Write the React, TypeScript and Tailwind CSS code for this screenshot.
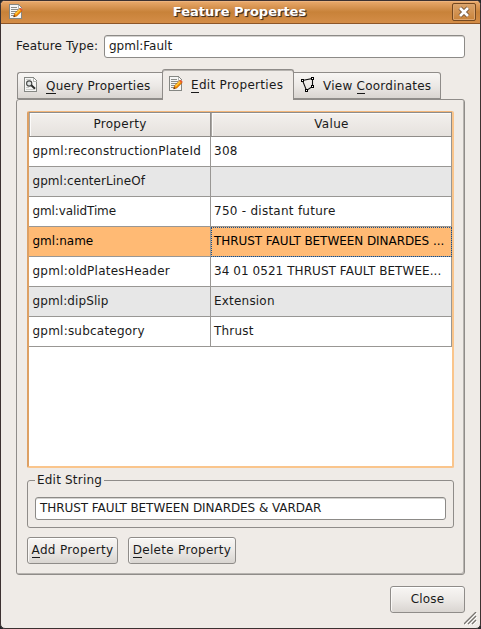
import React from "react";

const rows = [
  { name: "gpml:reconstructionPlateId", nameTracking: "tracking-[0.25px]", value: "308", valueTracking: "tracking-[0.3px]" },
  { name: "gpml:centerLineOf", nameTracking: "tracking-[0.05px]", value: "", valueTracking: "" },
  { name: "gml:validTime", nameTracking: "tracking-[-0.1px]", value: "750 - distant future", valueTracking: "tracking-[0.26px]" },
  { name: "gml:name", nameTracking: "", value: "THRUST FAULT BETWEEN DINARDES ...", valueTracking: "tracking-[-0.06px]", selected: true },
  { name: "gpml:oldPlatesHeader", nameTracking: "tracking-[0.25px]", value: "34 01 0521 THRUST FAULT BETWEE...", valueTracking: "tracking-[0.06px]" },
  { name: "gpml:dipSlip", nameTracking: "tracking-[0.1px]", value: "Extension", valueTracking: "tracking-[0.2px]" },
  { name: "gpml:subcategory", nameTracking: "tracking-[0.22px]", value: "Thrust", valueTracking: "tracking-[0.2px]" },
];

const surface = "bg-linear-to-b from-[#f8f6f4] via-[#ece9e6] to-[#d9d5d1]";
const field =
  "flex items-center rounded-[3px] border border-[#8c8a87] bg-white pb-[1px] shadow-[inset_0_1px_0_#d4d2cf]";
const button = `flex h-[27px] items-center justify-center rounded-[3px] border border-[#8f8c89] pb-[2px] shadow-[inset_0_1px_0_#fff,inset_1px_0_0_#faf8f6] ${surface}`;
const headerCell =
  "border-t border-r border-b border-[#8f8c89] p-0 pb-[1px] pl-[1px] font-normal tracking-[0.3px] shadow-[inset_1px_0_0_#a9a6a2,inset_2px_1px_0_#fcfbfa]";

function Document({ edit = false }: { edit?: boolean }) {
  return (
    <svg width="16" height={edit ? 16 : 17} viewBox={edit ? "0 0 16 16" : "0 0 16 17"} shapeRendering="crispEdges" className="shrink-0">
      <path d="M1.5 .5h9l3 3v11h-12z" fill="#f6f6f5" stroke="#858783" />
      <path d="M10.5 1v3h3" fill="#fff" stroke="#b5b7b3" />
      {edit ? (
        <>
          <path d="M3 3.5h6M3 5.5h7M3 7.5h7M3 9.5h5M3 11.5h4" stroke="#8b8d89" />
          <g shapeRendering="auto" transform="translate(-.8 0)">
            <path d="M6.4 12.9l1-3.2 5.3-5.2 2.2 2.2-5.3 5.2z" fill="#f58900" stroke="#b65a09" strokeWidth=".7" />
            <path d="M7.7 9.7l5-4.8 1 .8-4.9 5z" fill="#ffd13b" />
            <path d="M12.3 4.9l1.2-1.1 2.1 2.1-1.2 1.1z" fill="#e7582f" />
            <path d="M6.4 12.9l.6-1.7 1.1 1z" fill="#33291f" />
          </g>
        </>
      ) : (
        <>
          <path d="M3 2.5h5M3 10.5h3M3 12.5h8" stroke="#cacbc8" />
          <g shapeRendering="auto">
            <circle cx="6.2" cy="6.5" r="2.6" fill="#e0e4e4" stroke="#454745" strokeWidth="1.1" />
            <path d="M8.3 8.3l3.7 3.5" stroke="#292b29" strokeWidth="2" />
          </g>
        </>
      )}
    </svg>
  );
}

function Polygon() {
  return (
    <svg width="15" height="17" viewBox="0 0 15 17" className="shrink-0">
      <path d="M1.5 3.5l10-2v8l-6 4z" fill="none" stroke="#111" strokeWidth="1.1" />
      <g fill="#fff" stroke="#000" shapeRendering="crispEdges">
        <path d="M.5 2.5h2v2h-2zM10.5 .5h2v2h-2zM10.5 8.5h2v2h-2zM4.5 12.5h2v2h-2z" />
      </g>
    </svg>
  );
}

function Key({ children }: { children: string }) {
  return <span className="border-b border-[#1a1a1a]">{children}</span>;
}

export default function App() {
  return (
    <div className="h-[629px] w-[481px] bg-[#25272a] font-['DejaVu_Sans',sans-serif] text-[12px] leading-[14px] whitespace-nowrap text-[#1a1a1a]">
      <main className="relative flex h-full flex-col overflow-hidden rounded-[5px] border border-[#3c3131] bg-[#efebe7]">
        <header className="relative flex h-[23px] shrink-0 items-center border-b border-[#8d5628] bg-linear-to-b from-[#eaaa6c] via-[#c88239] to-[#d48d47] pr-[4px] pl-[7px] shadow-[inset_0_1px_0_#edb47e]">
          <Document edit />
          <h1 className="flex-1 pl-[3px] text-center text-[13px] font-bold text-white [text-shadow:1px_1px_1px_#493322,1px_1px_0_#493322]">Feature Propertes</h1>
          <button aria-label="Close window" className="flex h-[18px] w-6 items-center justify-center rounded-[2px] border border-[#744820] bg-linear-to-b from-[#daa36a] to-[#c98339] shadow-[inset_0_0_0_1px_#dca56f]">
            <svg width="12" height="12" viewBox="0 0 12 12">
              <path d="M2 2l8 8m0-8l-8 8" stroke="#5e4029" strokeWidth="4.2" />
              <path d="M2 2l8 8m0-8l-8 8" stroke="#fff" strokeWidth="2.8" />
            </svg>
          </button>
        </header>

        <div className="flex flex-1 flex-col px-[15px] pt-[11px]">
          <div className="flex h-[23px] items-center">
            <label className="w-[88px] pb-[1px] tracking-[0.1px]">Feature Type:</label>
            <div className={`${field} h-[23px] flex-1 pl-[4px]`}>gpml:Fault</div>
          </div>

          <nav className="mt-[11px] flex h-[31px] items-end pl-[1px]">
            <button className={`mb-[1px] flex h-[27px] w-[145px] items-center rounded-tl-[3px] border border-r-0 border-[#8f8c89] pl-[5px] ${surface}`}>
              <Document />
              <span className="ml-[7px] tracking-[0.22px]"><Key>Q</Key>uery Properties</span>
            </button>
            <button className="relative z-10 flex h-[31px] w-[132px] items-center rounded-t-[3px] border border-b-0 border-[#8f8c89] bg-[#efebe7] pb-[2px] pl-[5px] shadow-[inset_0_1px_0_#b7b4b0]">
              <Document edit />
              <span className="mt-[2px] ml-[7px] tracking-[0.3px]"><Key>E</Key>dit Properties</span>
            </button>
            <button className={`mb-[1px] flex h-[27px] w-[147px] items-center rounded-tr-[3px] border border-l-0 border-[#8f8c89] pl-[7px] ${surface}`}>
              <Polygon />
              <span className="ml-[7px] tracking-[0.25px]">View <Key>C</Key>oordinates</span>
            </button>
          </nav>

          <section className="-mt-[1px] flex h-[476px] flex-col rounded-[3px] border border-[#8f8c89] px-[10px] pt-[11px] shadow-[inset_-1px_-1px_0_#b7b4b0]">
            <div className="h-[357px] w-[427px] rounded-[2px] border-2 border-t-1 border-t-[#f4b678] border-r-[#fac58c] border-b-[#fac58c] border-l-[#dda064] bg-white">
              <table className="w-[423px] table-fixed border-separate border-spacing-0">
                <colgroup><col className="w-[182px]" /><col /></colgroup>
                <thead>
                  <tr className="h-[25px] bg-linear-to-b from-[#f4f1ee] to-[#e5e1dd]">
                    <th className={headerCell}>Property</th>
                    <th className={headerCell}>Value</th>
                  </tr>
                </thead>
                <tbody>
                  {rows.map((row, i) => (
                    <tr key={row.name} className={`h-[30px] ${row.selected ? "bg-[#ffba74] text-black" : i % 2 ? "bg-[#e7e7e7]" : "bg-white"}`}>
                      <td className={`border-r border-b border-[#999794] p-0 pb-[1px] pl-[3.5px] ${row.nameTracking}`}>{row.name}</td>
                      <td className={`border-r border-b border-[#999794] p-0 pb-[1px] pl-[3px] ${row.valueTracking} ${row.selected ? "outline-1 -outline-offset-1 outline-dotted outline-[#174c88]" : ""}`}>{row.value}</td>
                    </tr>
                  ))}
                </tbody>
              </table>
            </div>

            <fieldset className="relative mt-[12px] h-[48px] w-[427px] rounded-[3px] border border-[#8f8c89] px-[7px] pt-[16px]">
              <span className="absolute -top-[8px] left-[7px] bg-[#efebe7] px-[2px] tracking-[0.2px]">Edit String</span>
              <div className={`${field} h-[23px] pl-[4px] tracking-[-0.06px]`}>THRUST FAULT BETWEEN DINARDES &amp; VARDAR</div>
            </fieldset>

            <div className="mt-[9px] flex gap-[10px]">
              <button className={`${button} w-[91px] tracking-[0.33px]`}><span><Key>A</Key>dd Property</span></button>
              <button className={`${button} w-[108px] tracking-[0.3px]`}><span><Key>D</Key>elete Property</span></button>
            </div>
          </section>

          <footer className="mt-[11px] flex justify-end">
            <button className={`${button} w-[75px] tracking-[0.2px]`}>Close</button>
          </footer>
        </div>
        <svg className="absolute right-[3px] bottom-[3px]" width="13" height="13" viewBox="0 0 13 13">
          <path d="M0 12L12 0M4 12l8-8M8 12l4-4" stroke="#76736f" strokeWidth="1.3" />
          <path d="M1 13L13 1M5 13l8-8M9 13l4-4" stroke="#fff" />
        </svg>
      </main>
    </div>
  );
}
